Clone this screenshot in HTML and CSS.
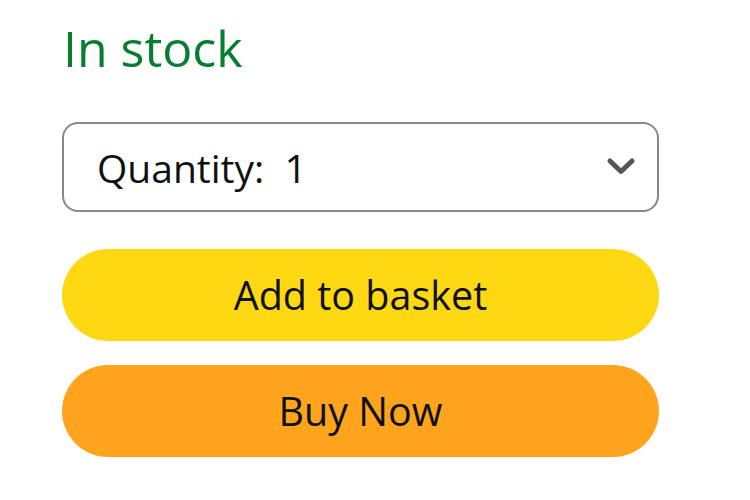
FILE: index.html
```html
<!DOCTYPE html>
<html lang="en">
<head>
    <meta charset="UTF-8">
    <meta name="viewport" content="width=device-width, initial-scale=1.0">
    <title>Buy box</title>
    <link rel="stylesheet" href="styles.css">
</head>
<body>
    <div class="buy-box">
        <div class="stock">In stock</div>

        <!-- Quantity selector -->
        <div class="quantity">
            <span class="quantity-label">Quantity:&nbsp; 1</span>
            <svg class="chevron" width="32" height="20" viewBox="0 0 32 20">
                <path d="M5 4 L16 14.5 L27 4" fill="none" stroke="#555" stroke-width="5" stroke-linecap="round" stroke-linejoin="round"/>
            </svg>
        </div>

        <button class="btn add">Add to basket</button>
        <button class="btn buy">Buy Now</button>
    </div>
</body>
</html>
```

FILE: styles.css
```css
body {
    font-family: "Open Sans", Arial, sans-serif;
    background-color: #ffffff;
    margin: 0;
}

.buy-box {
    width: 597px;
    margin-left: 62px;
    padding-top: 16px;
    display: flex;
    flex-direction: column;
}

.stock {
    color: #067d2f;
    font-size: 50px;
    line-height: 64px;
    margin-left: 1px;
}

.quantity {
    margin-top: 42px;
    height: 90px;
    box-sizing: border-box;
    border: 2px solid #888;
    border-radius: 16px;
    display: flex;
    align-items: center;
    justify-content: space-between;
    padding: 0 20px 0 33px;
}

.quantity-label {
    font-size: 39px;
    color: #0f1111;
}

.btn {
    height: 92px;
    border: none;
    border-radius: 46px;
    font-family: inherit;
    font-size: 39.5px;
    color: #0f1111;
    cursor: pointer;
}

.add {
    margin-top: 37px;
    background-color: #ffd814;
}

.buy {
    margin-top: 24px;
    background-color: #ffa41c;
}
```
